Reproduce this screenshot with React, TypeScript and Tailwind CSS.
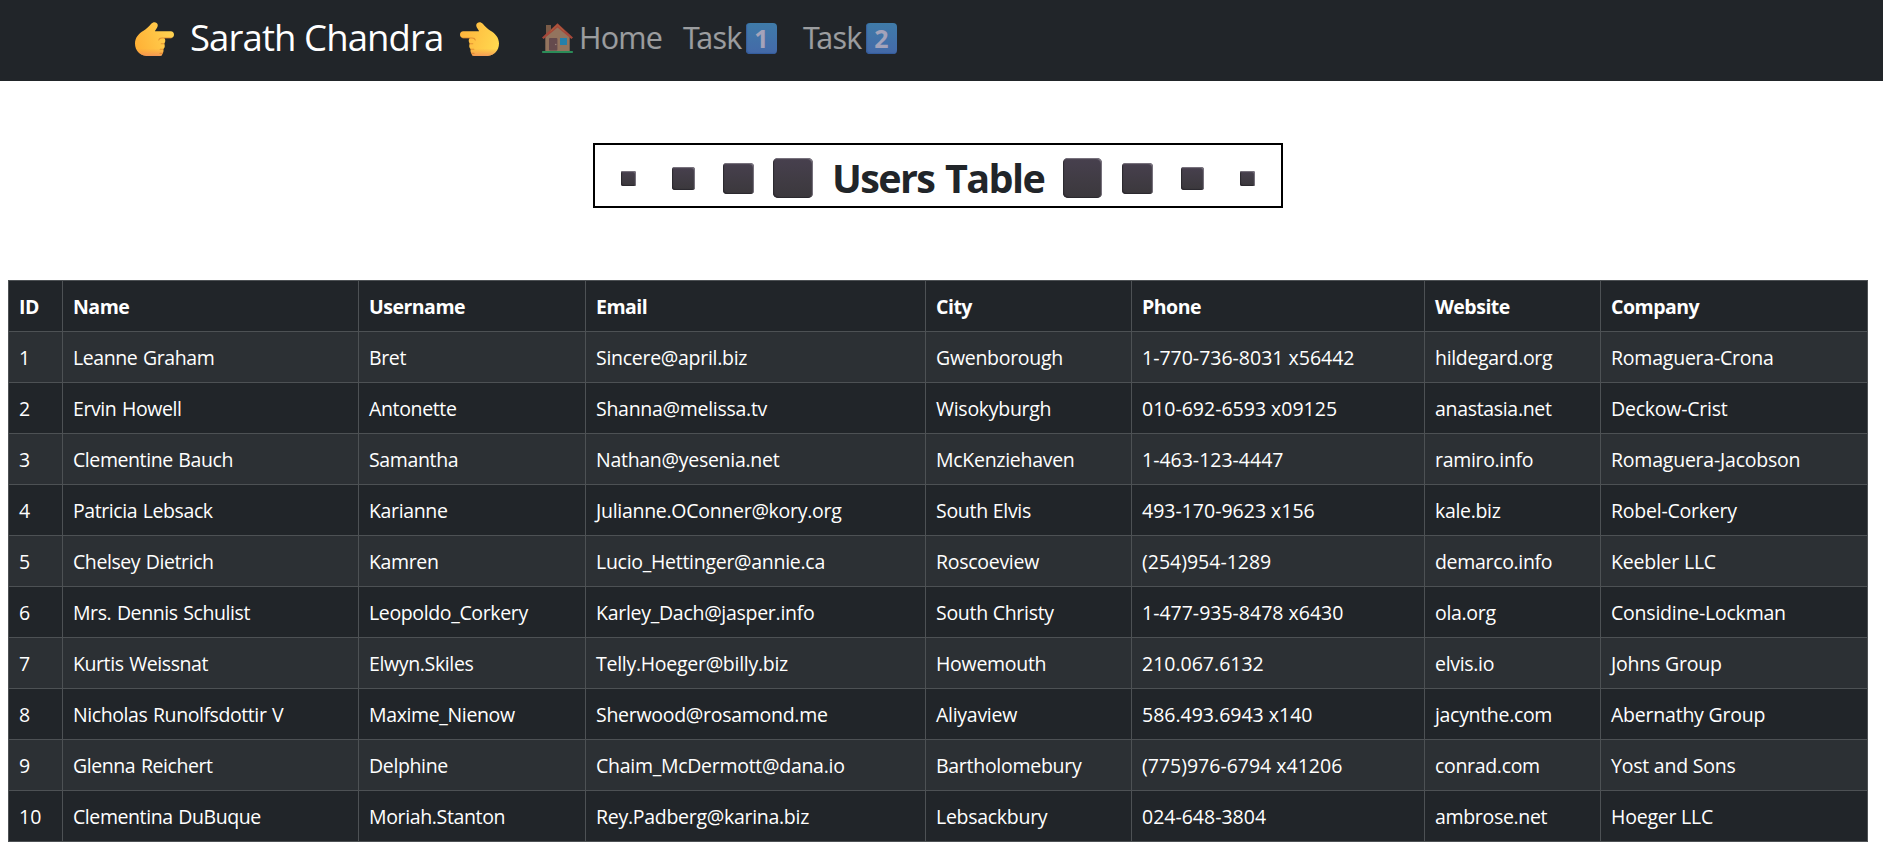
import React from "react";

const columns = ["ID", "Name", "Username", "Email", "City", "Phone", "Website", "Company"];

const users: string[][] = [
  ["1", "Leanne Graham", "Bret", "Sincere@april.biz", "Gwenborough", "1-770-736-8031 x56442", "hildegard.org", "Romaguera-Crona"],
  ["2", "Ervin Howell", "Antonette", "Shanna@melissa.tv", "Wisokyburgh", "010-692-6593 x09125", "anastasia.net", "Deckow-Crist"],
  ["3", "Clementine Bauch", "Samantha", "Nathan@yesenia.net", "McKenziehaven", "1-463-123-4447", "ramiro.info", "Romaguera-Jacobson"],
  ["4", "Patricia Lebsack", "Karianne", "Julianne.OConner@kory.org", "South Elvis", "493-170-9623 x156", "kale.biz", "Robel-Corkery"],
  ["5", "Chelsey Dietrich", "Kamren", "Lucio_Hettinger@annie.ca", "Roscoeview", "(254)954-1289", "demarco.info", "Keebler LLC"],
  ["6", "Mrs. Dennis Schulist", "Leopoldo_Corkery", "Karley_Dach@jasper.info", "South Christy", "1-477-935-8478 x6430", "ola.org", "Considine-Lockman"],
  ["7", "Kurtis Weissnat", "Elwyn.Skiles", "Telly.Hoeger@billy.biz", "Howemouth", "210.067.6132", "elvis.io", "Johns Group"],
  ["8", "Nicholas Runolfsdottir V", "Maxime_Nienow", "Sherwood@rosamond.me", "Aliyaview", "586.493.6943 x140", "jacynthe.com", "Abernathy Group"],
  ["9", "Glenna Reichert", "Delphine", "Chaim_McDermott@dana.io", "Bartholomebury", "(775)976-6794 x41206", "conrad.com", "Yost and Sons"],
  ["10", "Clementina DuBuque", "Moriah.Stanton", "Rey.Padberg@karina.biz", "Lebsackbury", "024-648-3804", "ambrose.net", "Hoeger LLC"],
];

// Letter and word spacing of the body cells, by column.
const tracking = [
  "tracking-normal",
  "tracking-[-0.42px] [word-spacing:1px]",
  "tracking-[-0.36px]",
  "tracking-[-0.28px]",
  "tracking-[-0.28px]",
  "tracking-normal",
  "tracking-[-0.32px]",
  "tracking-[-0.22px]",
];

const HAND =
  "M16.2 1.8C17.6 .1 20 -.3 21.6 .9C23.2 2.2 23 4.1 22 5.7L19.8 9.3H35.8C37.8 9.3 39 10.9 39 12.7C39 14.6 37.7 16 35.8 16H29.3C30.7 17.8 30.6 20 29.2 21.6C30.2 23.6 29.9 25.7 28.2 27.2C28.8 29 28.4 30.6 27.4 31.5C27.3 33.2 26.3 34 24.8 34H11.5C4.6 33.4 0 28.3 0 21.6C0 15.5 3.8 11.4 8.5 8.7C11.5 7 14 4.4 16.2 1.8Z";

function Hand({ left = false }: { left?: boolean }) {
  const id = left ? "hand-left" : "hand-right";
  return (
    <svg width="39" height="34" viewBox="0 0 39 34" className="shrink-0">
      <defs>
        {/* Light comes from the right on both hands, so the mirrored one swaps its stops. */}
        <linearGradient id={id} x1="0" y1="0.6" x2="1" y2="0.3">
          <stop offset="0" stopColor={left ? "#ffd94f" : "#ffb136"} />
          <stop offset="1" stopColor={left ? "#ffb43c" : "#ffd452"} />
        </linearGradient>
        <linearGradient id={id + "-base"} x1="0" y1="0" x2="0" y2="1">
          <stop offset="0.78" stopColor="#f08a4b" stopOpacity="0" />
          <stop offset="1" stopColor="#f08a5b" stopOpacity="0.75" />
        </linearGradient>
      </defs>
      <g transform={left ? "translate(39 0) scale(-1 1)" : undefined}>
        <path d={HAND} fill={`url(#${id})`} />
        <path d={HAND} fill={`url(#${id}-base)`} />
        <path
          d="M36 16H27C25 16 24 16.8 23.8 18M29.2 21.8H26.2M28.2 27.2H25.2M27.4 31.4H25"
          fill="none"
          stroke="#d9822b"
          strokeWidth="1.1"
          strokeLinecap="round"
          opacity="0.75"
        />
      </g>
    </svg>
  );
}

function House() {
  return (
    <svg width="31" height="30" viewBox="0 0 31 30" className="mb-[2px] shrink-0">
      <rect x="4" y="2" width="5" height="11" fill="#7a5b47" />
      <path d="M3.3 13.5L15.5 3L27.7 13.5V28H3.3Z" fill="#93745e" />
      <path d="M0 14.4L15.5 .3L31 14.4L29.4 16L15.5 4.6L1.6 16Z" fill="#a5483a" />
      <path d="M8.5 8.4L15.5 2L22.5 8.4" fill="none" stroke="#b0603c" strokeWidth="1" />
      <rect x="7" y="15" width="8.4" height="12.6" rx="1" fill="#654a4d" />
      <circle cx="13.8" cy="21.5" r="0.7" fill="#a08a80" />
      <rect x="18" y="15" width="7" height="7" fill="#2580ab" />
      <rect x="0" y="28" width="31" height="2" rx="0.8" fill="#2b8c58" />
    </svg>
  );
}

function Keycap({ digit }: { digit: string }) {
  return (
    <span className="mb-[2px] flex h-[31px] w-[31px] shrink-0 items-center justify-center rounded-[4px] bg-linear-to-b from-[#3f7ba8] to-[#4469a8] text-[25px] leading-[31px] font-bold text-[#a4a3ba] shadow-[inset_1px_-1px_1px_#345c9c]">
      {digit}
    </span>
  );
}

function TaskLink({ digit }: { digit: string }) {
  return (
    <a className="flex items-center">
      <span className="w-[64px] pt-px pb-[3px] pl-px text-[30.5px] tracking-[-0.8px] text-white/55">
        <span className="tracking-[-3.5px]">T</span>ask
      </span>
      <Keycap digit={digit} />
    </a>
  );
}

const SQUARE =
  "shrink-0 bg-linear-to-b from-[#47404e] to-[#3b383c] shadow-[inset_-1px_1px_1px_#7d7782,inset_1px_-1px_1px_#2b282e]";

export default function App() {
  return (
    <div className="min-h-[859px] bg-white font-['Open_Sans','Noto_Sans',sans-serif] text-[#212529]">
      <nav className="flex h-[81px] items-center bg-[#212529] pb-[3px] pl-[135px]">
        <a className="flex items-center">
          <Hand />
          <span className="ml-[16px] w-[270px] pb-[3px] text-[36.5px] tracking-[-0.9px] whitespace-nowrap text-white">
            Sarath Chandra
          </span>
          <Hand left />
        </a>
        <a className="ml-[43px] flex items-center">
          <House />
          <span className="ml-[5px] w-[104px] pt-px pb-[3px] pl-px text-[30.5px] tracking-[-0.8px] text-white/55">
            Home
          </span>
        </a>
        <TaskLink digit="1" />
        <div className="w-[25px]" />
        <TaskLink digit="2" />
      </nav>

      <h1 className="mt-[62px] ml-[593px] flex h-[65px] w-[690px] items-center border-2 border-black pt-[5px] text-[39.5px] leading-[40px] font-bold">
        <span className={`${SQUARE} ml-[26px] h-[15px] w-[15px] rounded-[2px]`} />
        <span className={`${SQUARE} ml-[36px] h-[23px] w-[23px] rounded-[3px]`} />
        <span className={`${SQUARE} ml-[28px] h-[31px] w-[31px] rounded-[4px]`} />
        <span className={`${SQUARE} ml-[19px] h-[40px] w-[40px] rounded-[5px]`} />
        <span className="ml-[19px] w-[231px] shrink-0 pb-px tracking-[-1.6px] whitespace-nowrap [word-spacing:2px]">
          Users Table
        </span>
        <span className={`${SQUARE} h-[40px] w-[39px] rounded-[5px]`} />
        <span className={`${SQUARE} ml-[20px] h-[31px] w-[31px] rounded-[4px]`} />
        <span className={`${SQUARE} ml-[28px] h-[23px] w-[23px] rounded-[3px]`} />
        <span className={`${SQUARE} ml-[36px] h-[15px] w-[15px] rounded-[2px]`} />
      </h1>

      <table className="mt-[72px] ml-2 w-[1860px] table-fixed border-collapse text-[19.5px] leading-[30px] text-white">
        <colgroup>
          <col className="w-[54px]" />
          <col className="w-[296px]" />
          <col className="w-[227px]" />
          <col className="w-[340px]" />
          <col className="w-[206px]" />
          <col className="w-[293px]" />
          <col className="w-[176px]" />
          <col className="w-[267px]" />
        </colgroup>
        <thead>
          <tr className="h-[51px] bg-[#212529]">
            {columns.map((c) => (
              <th
                key={c}
                className="border border-[#4d5154] px-[10px] pt-[11px] pb-[9px] text-left font-bold tracking-[-0.5px]"
              >
                {c}
              </th>
            ))}
          </tr>
        </thead>
        <tbody>
          {users.map((row) => (
            <tr key={row[0]} className="h-[51px] bg-[#212529] odd:bg-[#2c3034]">
              {row.map((cell, i) => (
                <td
                  key={columns[i]}
                  className={`border border-[#4d5154] px-[10px] pt-[11px] pb-[9px] whitespace-nowrap ${tracking[i]}`}
                >
                  {cell}
                </td>
              ))}
            </tr>
          ))}
        </tbody>
      </table>
    </div>
  );
}
